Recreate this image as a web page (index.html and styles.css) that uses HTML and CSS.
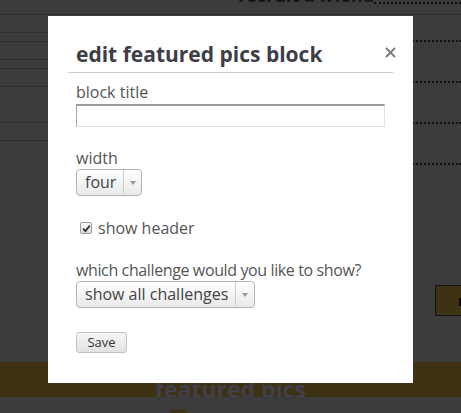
FILE: index.html
```html
<!DOCTYPE html>
<html>
<head>
<meta charset="utf-8">
<link rel="stylesheet" href="styles.css">
</head>
<body>
<div class="page">
  <div class="topbar">
    <div class="recruit"><span class="recruit-text">recruit a friend</span><span class="leader"></span></div>
  </div>
  <div class="upper">
    <div class="left-col">
      <div class="lrow h17"></div>
      <div class="lrow h8"></div>
      <div class="lrow h17"></div>
      <div class="lrow h8"></div>
      <div class="lrow h17"></div>
      <div class="lrow h35"></div>
      <div class="lrow h17"></div>
    </div>
    <div class="mid-col"></div>
    <div class="right-col">
      <div class="drow first"></div>
      <div class="drow"></div>
      <div class="drow"></div>
      <div class="drow"></div>
      <div class="bg-button">n</div>
    </div>
  </div>
  <div class="band"><span class="band-text">featured pics</span></div>
  <div class="lower"><span class="thumb"></span></div>
</div>

<div class="modal">
  <svg class="close" width="11" height="11" viewBox="0 0 11 11"><path d="M1 1 L10 10 M10 1 L1 10" stroke="#7a7a7a" stroke-width="1.8" fill="none"/></svg>
  <h1 class="title">edit featured pics block</h1>
  <div class="rule"></div>
  <div class="fields">
    <label class="label">block title</label>
    <div class="text-input"></div>

    <label class="label gap">width</label>
    <div class="select"><span class="sel-text">four</span><span class="sel-arrow"><svg width="6" height="4" viewBox="0 0 6 4"><path d="M0 0 L6 0 L3 4 Z" fill="#999"/></svg></span></div>

    <div class="check-row">
      <span class="checkbox"><svg width="9" height="9" viewBox="0 0 9 9"><path d="M1.2 4.6 L3.4 7 L7.8 1.6" stroke="#333" stroke-width="1.8" fill="none"/></svg></span>
      <span class="check-label">show header</span>
    </div>

    <label class="label gap tight">which challenge would you like to show?</label>
    <div class="select"><span class="sel-text">show all challenges</span><span class="sel-arrow wide"><svg width="6" height="4" viewBox="0 0 6 4"><path d="M0 0 L6 0 L3 4 Z" fill="#999"/></svg></span></div>

    <div class="save-wrap"><span class="save">Save</span></div>
  </div>
</div>
</body>
</html>
```
FILE: styles.css
```css
html, body {
  margin: 0;
  padding: 0;
}
body {
  background: #3c3c3c;
  font-family: "Open Sans", "Liberation Sans", sans-serif;
  width: 461px;
  height: 413px;
  overflow: hidden;
  position: relative;
}
.page {
  display: flex;
  flex-direction: column;
  height: 413px;
}
.topbar {
  height: 14px;
  border-bottom: 1px solid #303030;
  display: flex;
  overflow: hidden;
}
.recruit {
  margin-left: 238px;
  flex: 1;
  display: flex;
  align-items: flex-end;
  height: 14px;
}
.recruit-text {
  font-weight: 700;
  font-size: 18px;
  line-height: 20px;
  color: #161616;
  margin-bottom: 9px;
  white-space: nowrap;
}
.leader {
  flex: 1;
  border-bottom: 2px dotted #111;
  margin-bottom: 10px;
}
.upper {
  height: 347px;
  display: flex;
  overflow: hidden;
}
.left-col {
  width: 60px;
  display: flex;
  flex-direction: column;
}
.lrow {
  border-bottom: 1px solid #303030;
}
.h17 { height: 17px; }
.h8 { height: 8px; }
.h35 { height: 35px; }
.mid-col {
  flex: 1;
}
.right-col {
  width: 200px;
  display: flex;
  flex-direction: column;
  overflow: hidden;
}
.drow {
  height: 39px;
  border-bottom: 2px dotted #111;
}
.drow.first {
  height: 25px;
}
.bg-button {
  margin-top: 120px;
  margin-left: 174px;
  width: 60px;
  height: 29px;
  background: #3e3214;
  border: 1px solid #141414;
  box-sizing: content-box;
  font-weight: 700;
  font-size: 15px;
  line-height: 29px;
  color: #000;
  padding-left: 22px;
}
.band {
  height: 35px;
  background: #3e3114;
  display: flex;
  justify-content: center;
  align-items: flex-end;
  overflow: hidden;
}
.band-text {
  font-weight: 700;
  font-size: 23px;
  line-height: 26px;
  color: #40404a;
  margin-bottom: -5px;
}
.lower {
  height: 16px;
  position: relative;
}
.thumb {
  display: block;
  margin-left: 170px;
  margin-top: 13px;
  width: 16px;
  height: 3px;
  background: #3e3114;
}

.modal {
  position: absolute;
  left: 48px;
  top: 16px;
  width: 365px;
  height: 367px;
  box-sizing: border-box;
  background: #fff;
  padding: 24px 20px 0;
}
.close {
  position: absolute;
  right: 17px;
  top: 31px;
}
.title {
  margin: 0;
  padding-left: 8px;
  font-size: 21px;
  line-height: 28px;
  font-weight: 700;
  color: #3e3e46;
}
.rule {
  margin-top: 4px;
  height: 1px;
  background: #cfcfcf;
}
.fields {
  padding: 8px 8px 0;
  display: flex;
  flex-direction: column;
  align-items: flex-start;
}
.label {
  display: block;
  font-size: 16px;
  line-height: 22px;
  color: #555;
}
.label.gap {
  margin-top: 20px;
}
.label.tight {
  letter-spacing: -0.38px;
}
.text-input {
  margin-top: 1px;
  width: 309px;
  height: 23px;
  box-sizing: border-box;
  border-style: solid;
  border-width: 2px 1px 1px 1px;
  border-color: #9c9c9c #e2e2e2 #e2e2e2 #a8a8a8;
  background: #fff;
}
.select {
  margin-top: 0;
  height: 27px;
  box-sizing: border-box;
  display: flex;
  align-items: stretch;
  border: 1px solid #b4b4b4;
  border-radius: 4px;
  background: linear-gradient(#ffffff, #e9e9e9);
}
.sel-text {
  padding: 0 7px 0 8px;
  font-size: 16px;
  line-height: 25px;
  color: #444;
  border-right: 1px solid #cfcfcf;
  white-space: nowrap;
}
.sel-arrow {
  width: 17px;
  display: flex;
  align-items: center;
  justify-content: center;
}
.sel-arrow.wide {
  width: 18px;
}
.check-row {
  margin-top: 21px;
  height: 22px;
  display: flex;
  align-items: center;
}
.checkbox {
  margin-left: 4px;
  margin-right: 6px;
  width: 12px;
  height: 12px;
  box-sizing: border-box;
  border: 1px solid #9a9a9a;
  border-radius: 2px;
  background: linear-gradient(#fcfcfc, #dcdcdc);
  display: flex;
  align-items: center;
  justify-content: center;
}
.check-label {
  font-size: 16px;
  line-height: 22px;
  color: #555;
}
.save-wrap {
  margin-top: 22px;
}
.save {
  display: inline-block;
  width: 51px;
  height: 21px;
  box-sizing: border-box;
  border: 1px solid #c2c2c2;
  border-radius: 3px;
  background: linear-gradient(#f7f7f7, #e2e2e2);
  font-size: 13px;
  line-height: 19px;
  text-align: center;
  color: #333;
}
```
